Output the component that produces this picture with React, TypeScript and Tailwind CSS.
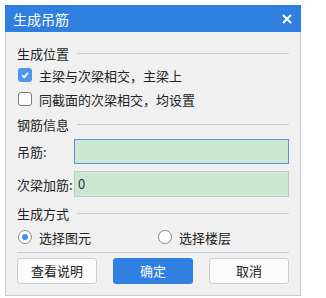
import React from "react";

const font = { fontFamily: '"Microsoft YaHei", "Noto Sans CJK SC", "Noto Sans", sans-serif' };

function Section({ title }: { title: string }) {
  return (
    <div className="flex items-center h-[20px] gap-[8px]">
      <span className="text-[13px] text-[#222] leading-none">{title}</span>
      <div className="flex-1 h-px bg-[#c6cdd9]" />
    </div>
  );
}

function Check({ checked, label }: { checked?: boolean; label: string }) {
  return (
    <div className="flex items-center h-[24px] gap-[7px] pl-[1px]">
      {checked ? (
        <div className="size-[14px] rounded-[3px] bg-[#4b95f3] flex items-center justify-center">
          <svg width="10" height="10" viewBox="0 0 10 10">
            <path d="M2 5.2 L4.2 7.3 L8 2.8" fill="none" stroke="white" strokeWidth="1.8" />
          </svg>
        </div>
      ) : (
        <div className="size-[14px] rounded-[3px] bg-white border border-[#7a7a7a]" />
      )}
      <span className="text-[13px] text-[#222] leading-none">{label}</span>
    </div>
  );
}

function Radio({ checked, label }: { checked?: boolean; label: string }) {
  return (
    <div className="flex items-center gap-[7px]">
      <div className="size-[14px] rounded-full bg-white border border-[#8a8a8a] flex items-center justify-center">
        {checked && <div className="size-[6px] rounded-full bg-[#3e8ef0]" />}
      </div>
      <span className="text-[13px] text-[#222] leading-none">{label}</span>
    </div>
  );
}

export default function App() {
  return (
    <div className="w-[326px] h-[298px] bg-white pt-[5px] pl-[5px]" style={font}>
      <div className="w-[296px] h-[291px] flex flex-col border-x border-b border-[#c5cbd6] bg-[#f0f0f0]">
        <div className="h-[27px] -mx-px bg-[#2e7fdf] flex items-center justify-between pl-[8px] pr-[9px]">
          <span className="text-white text-[14px] leading-none">生成吊筋</span>
          <svg width="10" height="10" viewBox="0 0 10 10">
            <path d="M1 1 L9 9 M9 1 L1 9" stroke="white" strokeWidth="2" />
          </svg>
        </div>

        <div className="flex flex-col px-[11px]">
          <div className="mt-[11px]">
            <Section title="生成位置" />
          </div>
          <Check checked label="主梁与次梁相交，主梁上" />
          <Check label="同截面的次梁相交，均设置" />

          <div className="mt-[3px]">
            <Section title="钢筋信息" />
          </div>
          <div className="flex items-center mt-[5px] h-[25px]">
            <span className="w-[57px] text-[13px] text-[#222] leading-none">吊筋:</span>
            <div className="flex-1 h-full bg-[#cde8d0] border border-[#5d8fe0]" />
          </div>
          <div className="flex items-center mt-[7px] h-[26px]">
            <span className="w-[57px] text-[13px] text-[#222] leading-none">次梁加筋:</span>
            <div className="flex-1 h-full bg-[#cde8d0] border border-[#c2c8c4] flex items-center pl-[3px] text-[13px] text-[#333]">
              0
            </div>
          </div>

          <div className="mt-[6px]">
            <Section title="生成方式" />
          </div>
          <div className="flex items-center h-[24px] mt-[2px] pl-[1px]">
            <div className="w-[140px]">
              <Radio checked label="选择图元" />
            </div>
            <Radio label="选择楼层" />
          </div>

          <div className="mt-[3px] h-px bg-[#c6cdd9]" />

          <div className="mt-[5px] flex justify-between h-[26px]">
            <button className="w-[80px] h-full rounded-[3px] border border-[#c8cdd6] bg-[#fafafa] text-[13px] text-[#222]">
              查看说明
            </button>
            <button className="w-[80px] h-full rounded-[3px] bg-[#2e7fdf] text-[13px] text-white">
              确定
            </button>
            <button className="w-[80px] h-full rounded-[3px] border border-[#c8cdd6] bg-[#fafafa] text-[13px] text-[#222]">
              取消
            </button>
          </div>
        </div>
      </div>
    </div>
  );
}
